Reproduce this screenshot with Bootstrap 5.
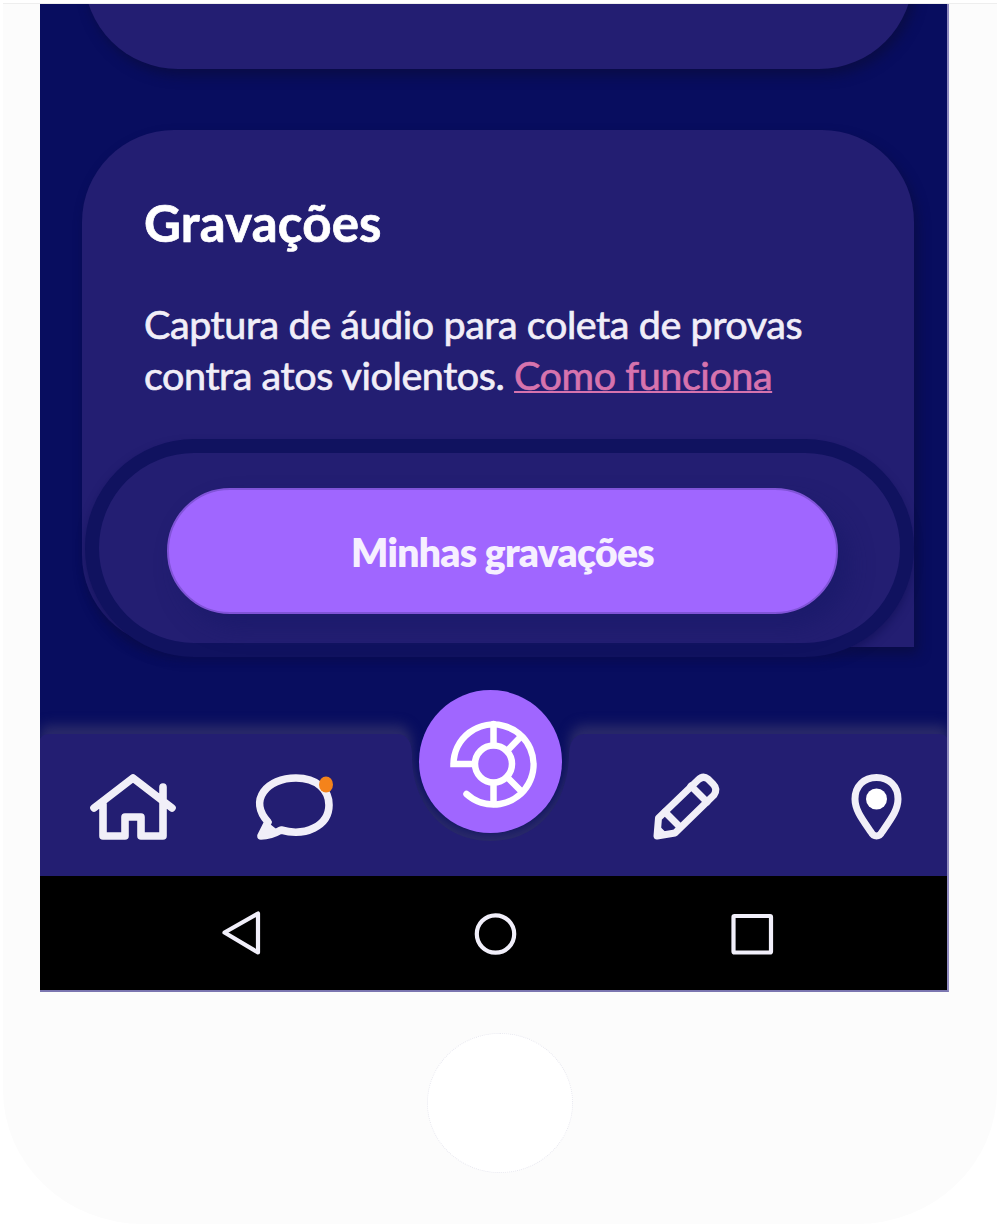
<!DOCTYPE html>
<html lang="pt-BR">
<head>
<meta charset="utf-8">
<meta name="viewport" content="width=device-width, initial-scale=1">
<title>Gravações</title>
<link href="https://cdn.jsdelivr.net/npm/bootstrap@5.3.0/dist/css/bootstrap.min.css" rel="stylesheet">
<style>
  body { background: #fff; font-family: Lato, "Liberation Sans", sans-serif; overflow: hidden; }
  .phone { width: 994px; height: 1221px; margin: 3px 0 0 3px; background: #fcfcfc; border-top: 1px solid #eee; border-radius: 0 0 140px 140px / 0 0 134px 134px; }
  .screen { width: 909px; height: 988px; margin-left: 37px; background: #080d5f; border-right: 2px solid #8f8abf; border-bottom: 2px solid #7b76b0; }
  .panel { width: 832px; margin-left: 42px; background: #231e72; box-shadow: 4px 7px 12px rgba(10,12,66,.8); }
  .prev-clip { height: 126px; overflow: hidden; }
  .prev-clip .panel { width: 829px; margin-left: 44px; height: 265px; margin-top: -200px; border-radius: 94px; }
  .panel-rec { height: 517px; border-radius: 92px 92px 0 92px; padding: 61px 0 0 62px; }
  .panel-rec h1 { font-size: 51px; line-height: 64px; letter-spacing: .2px; -webkit-text-stroke: .7px #fff; }
  .panel-rec p { font-size: 39.5px; line-height: 51px; letter-spacing: -.43px; color: #f1eef8; margin-top: 43px; -webkit-text-stroke: .7px #f1eef8; white-space: nowrap; }
  .panel-rec a { color: #d673ae; -webkit-text-stroke-color: #d673ae; text-decoration-thickness: 2px; text-underline-offset: 1px; text-decoration-skip-ink: none; }
  .ring { width: 829px; height: 218px; margin: 39px 0 0 -59px; padding-top: 5px; border: 14.5px solid #10125f; border-radius: 110px; background: #231e72; box-shadow: 0 5px 8px rgba(10,12,80,.5); }
  .btn-rec { width: 671px; height: 126px; margin-right: -6px; border: 2px solid #8154d8; border-radius: 63px; background: #a066ff; color: #f6f0ff; font-size: 39px; font-weight: 800; letter-spacing: -.7px; box-shadow: 12px 14px 22px rgba(25,24,105,.65); padding: 9px 12px 6px; }
  .btn-rec:hover { background: #a066ff; color: #fff; border-color: #8154d8; }
  .tabs { height: 168px; margin-top: 61px; }
  .tabs svg { display: block; overflow: visible; }
  .sysbar { height: 114px; background: #000; }
  .home-key { width: 146px; height: 140px; border-radius: 50%; background: #fff; border: 1px dotted #e8e8f0; margin: 41px 0 0 424px; }
</style>
</head>
<body>
<main class="phone">
  <section class="screen d-flex flex-column overflow-hidden">
    <div class="prev-clip flex-shrink-0"><div class="panel"></div></div>
    <article class="panel panel-rec flex-shrink-0">
      <h1 class="fw-bold text-white mb-0">Gravações</h1>
      <p class="mb-0">Captura de áudio para coleta de provas<br>contra atos violentos. <a href="#">Como funciona</a></p>
      <div class="ring d-flex align-items-center justify-content-center">
        <button type="button" class="btn btn-rec">Minhas gravações</button>
      </div>
    </article>
    <nav class="tabs flex-shrink-0" aria-label="Principal">
      <svg width="908" height="168" viewBox="40 708 908 168" fill="none" stroke="#f1eff8" stroke-width="7.600" stroke-linejoin="round" stroke-linecap="round">
        <defs>
          <filter id="glow" x="-5%" y="-25%" width="110%" height="150%" color-interpolation-filters="sRGB"><feDropShadow dx="0" dy="-9" stdDeviation="6" flood-color="#2a2a69"/></filter>
        </defs>
        <path filter="url(#glow)" fill="#231e72" stroke="none" d="M40 739Q42 734 50 734H398Q411 735 412 753C411 800 440 841 490.500 841C541 841 569 800 569 753Q570 735 584 734H938Q946 734 948 739V876H40Z"/>
        <circle cx="490.500" cy="761.500" r="71.500" fill="#a066ff" stroke="none"/>
        <g stroke="#fff" stroke-width="6.500">
          <path stroke-linejoin="miter" d="M473 764H453.500A40 40 0 1 1 466.500 794"/>
          <circle cx="493.500" cy="764" r="18.500"/>
          <path d="M493.500 724V745M493.500 783V804M507 751L520.500 737M507 777L520 790"/>
        </g>
        <path d="M94 808L133 778L172 808M163 787V836H141V817H125V836H103V804"/>
        <path d="M261 836L268 822C248 800 267 778 296 778C317 778 329 790 329 805C329 826 305 837 281 830C274 834 268 836 261 836Z"/>
        <path d="M262 835L270 826L275 830Z" fill="#f1eff8" stroke-width="3"/>
        <ellipse cx="326" cy="784.500" rx="7" ry="8" fill="#f4831b" stroke="none"/>
        <g stroke-width="7">
        <path d="M657 836L658.500 818L698 780Q703 775 708 779L713 784Q718 789 714 795L675 833Z"/>
        <path d="M691 786L707 802M665 812L680 827"/>
        <path d="M657 836L658 826L667 835Z" fill="#f1eff8" stroke-width="2"/>
        <path d="M876.500 836Q873 836 871 832C862 819 855 810 855 799C855 786 864 777.500 876.500 777.500C889 777.500 898 786 898 799C898 810 891 819 882 832Q880 836 876.500 836Z"/>
        </g>
        <circle cx="876.500" cy="799" r="10.500" fill="#fff" stroke="none"/>
      </svg>
    </nav>
    <nav class="sysbar flex-shrink-0" aria-label="Sistema">
      <svg class="d-block" width="908" height="114" viewBox="40 876 908 114" fill="none" stroke="#f1effa" stroke-width="4.200" stroke-linejoin="round">
        <path d="M224.500 932.500L258 913.500V952.500Z"/>
        <circle cx="495.500" cy="934" r="18.700"/>
        <rect x="733.500" y="916" width="37.500" height="36.500" rx="1"/>
      </svg>
    </nav>
  </section>
  <div class="home-key"></div>
</main>
<script src="https://cdn.jsdelivr.net/npm/bootstrap@5.3.0/dist/js/bootstrap.bundle.min.js"></script>
</body>
</html>
